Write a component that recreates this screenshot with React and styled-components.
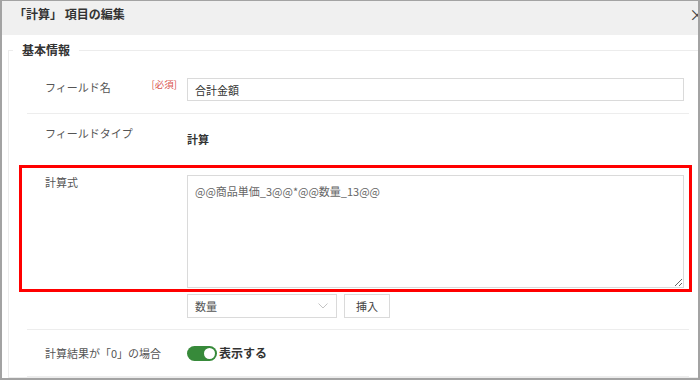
import React from 'react';
import styled, { createGlobalStyle } from 'styled-components';

const GlobalStyle = createGlobalStyle`
  html, body {
    margin: 0;
    padding: 0;
    background: #fff;
  }
  body {
    font-family: "Noto Sans CJK JP", "Noto Sans", "Liberation Sans", sans-serif;
    color: #333;
  }
`;

const Frame = styled.div`
  width: 700px;
  height: 380px;
  box-sizing: border-box;
  border-style: solid;
  border-color: #a3a3a3;
  border-width: 1px 2px 2px 2px;
  overflow: hidden;
  background: #fff;
`;

const Header = styled.div`
  height: 34px;
  background: #f0f0f0;
  display: flex;
  align-items: flex-start;
  justify-content: space-between;
  padding: 4px 0 0 12px;
  box-sizing: border-box;
`;

const Title = styled.h1`
  margin: 0;
  font-size: 12px;
  line-height: 18px;
  font-weight: 700;
  color: #333;
`;

const Close = styled.span`
  font-size: 16px;
  line-height: 18px;
  color: #444;
  margin-right: -7px;
`;

const Body = styled.div`
  padding: 6px 0 0 6px;
`;

const Fieldset = styled.fieldset`
  margin: 0;
  border: 1px solid #ececec;
  border-right: none;
  padding: 7px 9px 0 18px;
  min-width: 0;
`;

const Legend = styled.legend`
  margin-left: -14px;
  padding: 0 9px;
  font-size: 12px;
  line-height: 18px;
  font-weight: 700;
  color: #333;
`;

const Row = styled.div`
  display: grid;
  grid-template-columns: 160px 1fr;
  align-items: ${(p) => (p.$center ? 'center' : 'start')};
  padding: ${(p) => p.$pad || '12px 5px 12px 0'};
  min-height: ${(p) => p.$minHeight || 'auto'};
  box-sizing: border-box;
  border-bottom: 1px solid ${(p) => (p.$noDivider ? 'transparent' : '#ededed')};
`;

const Block = styled.div`
  padding: 0 5px 11px 0;
  border-bottom: 1px solid #ededed;
`;

const Highlight = styled.div`
  display: grid;
  grid-template-columns: 160px 1fr;
  align-items: start;
  margin: 0 -8px 0 -8px;
  border: 3px solid #ff0000;
  padding: 7px 5px 1px 5px;
`;

const LabelCell = styled.div`
  display: flex;
  justify-content: space-between;
  align-items: flex-start;
  padding: 0 10px 0 18px;
  margin-top: ${(p) => p.$shift || '0'};
`;

const Label = styled.span`
  font-size: 11px;
  line-height: 18px;
  color: #555;
`;

const Required = styled.span`
  font-size: 9.5px;
  line-height: 12px;
  color: #d9534f;
`;

const TextInput = styled.input`
  width: 100%;
  height: 23px;
  box-sizing: border-box;
  border: 1px solid #dadada;
  padding: 0 7px;
  font: inherit;
  font-size: 11px;
  color: #333;
  outline: none;
`;

const Value = styled.div`
  padding-top: 6px;
  font-size: 11px;
  line-height: 18px;
  font-weight: 700;
  color: #333;
`;

const Formula = styled.textarea`
  display: block;
  width: 100%;
  height: 113px;
  box-sizing: border-box;
  border: 1px solid #dadada;
  padding: 6px 7px;
  font: inherit;
  font-size: 11px;
  line-height: 18px;
  color: #666;
  outline: none;
  resize: vertical;
`;

const Controls = styled.div`
  display: flex;
  gap: 7px;
  margin: 2px 0 0 160px;
`;

const Select = styled.div`
  width: 150px;
  height: 24px;
  box-sizing: border-box;
  border: 1px solid #dadada;
  display: flex;
  align-items: center;
  justify-content: space-between;
  padding: 0 8px 0 7px;
  font-size: 11px;
  color: #555;
`;

const Button = styled.button`
  width: 46px;
  height: 24px;
  box-sizing: border-box;
  border: 1px solid #dadada;
  background: #fff;
  font: inherit;
  font-size: 11px;
  color: #444;
  padding: 0;
`;

const ToggleWrap = styled.div`
  display: flex;
  align-items: center;
  gap: 2px;
`;

const Track = styled.span`
  width: 30px;
  height: 15px;
  border-radius: 8px;
  background: #378a3a;
  display: flex;
  align-items: center;
  justify-content: flex-end;
  padding: 0 2px;
  box-sizing: border-box;
`;

const Knob = styled.span`
  width: 11px;
  height: 11px;
  border-radius: 50%;
  background: #fff;
`;

const ToggleText = styled.span`
  font-size: 12px;
  font-weight: 700;
  color: #333;
  line-height: 18px;
`;

const Chevron = () => (
  <svg width="10" height="6" viewBox="0 0 10 6" fill="none">
    <path d="M0.5 0.5 L5 5 L9.5 0.5" stroke="#c4c4c4" strokeWidth="1" />
  </svg>
);

export default function App() {
  return (
    <>
      <GlobalStyle />
      <Frame>
        <Header>
          <Title>「計算」 項目の編集</Title>
          <Close>×</Close>
        </Header>
        <Body>
          <Fieldset>
            <Legend>基本情報</Legend>

            <Row>
              <LabelCell>
                <Label>フィールド名</Label>
                <Required>[必須]</Required>
              </LabelCell>
              <TextInput defaultValue="合計金額" />
            </Row>

            <Row $noDivider $pad="10px 5px 16px 0">
              <LabelCell>
                <Label>フィールドタイプ</Label>
              </LabelCell>
              <Value>計算</Value>
            </Row>

            <Block>
              <Highlight>
                <LabelCell $shift="-2px">
                  <Label>計算式</Label>
                </LabelCell>
                <Formula readOnly defaultValue="@@商品単価_3@@*@@数量_13@@" />
              </Highlight>
              <Controls>
                <Select>
                  <span>数量</span>
                  <Chevron />
                </Select>
                <Button type="button">挿入</Button>
              </Controls>
            </Block>

            <Row $center $pad="0 5px 0 0" $minHeight="47px">
              <LabelCell>
                <Label>計算結果が「0」の場合</Label>
              </LabelCell>
              <ToggleWrap>
                <Track>
                  <Knob />
                </Track>
                <ToggleText>表示する</ToggleText>
              </ToggleWrap>
            </Row>
          </Fieldset>
        </Body>
      </Frame>
    </>
  );
}
